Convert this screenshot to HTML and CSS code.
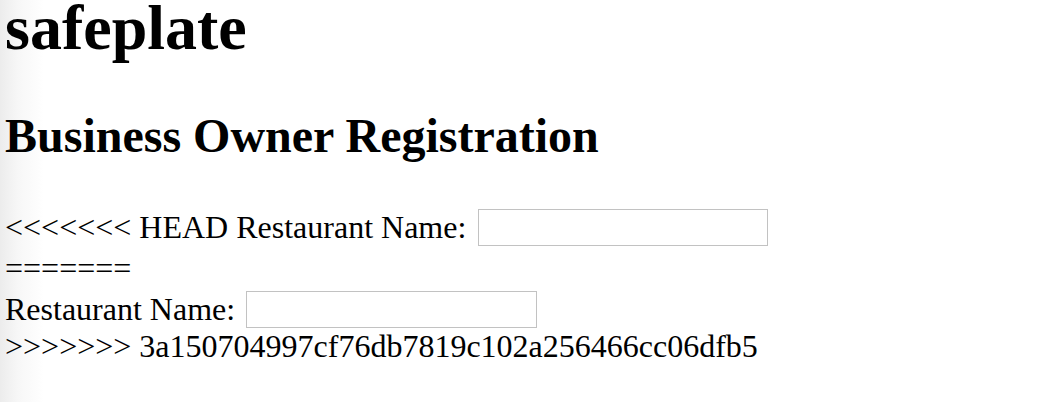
FILE: index.html
```html
<!DOCTYPE html>
<html lang="en">
<head>
<meta charset="utf-8">
<title>safeplate</title>
<link rel="stylesheet" href="styles.css">
</head>
<body>
<main class="page">
  <h1 class="brand">safeplate</h1>
  <h2 class="title">Business Owner Registration</h2>
  <form class="form">
    <div class="row row-head">
      <label class="label" for="name-a">&lt;&lt;&lt;&lt;&lt;&lt;&lt; HEAD Restaurant Name:</label>
      <input class="field" id="name-a" type="text">
    </div>
    <div class="row row-sep">=======</div>
    <div class="row row-other">
      <label class="label" for="name-b">Restaurant Name:</label>
      <input class="field field-b" id="name-b" type="text">
    </div>
    <div class="row row-end">&gt;&gt;&gt;&gt;&gt;&gt;&gt; 3a150704997cf76db7819c102a256466cc06dfb5</div>
  </form>
</main>
</body>
</html>
```

FILE: styles.css
```css
html, body {
  margin: 0;
  padding: 0;
}

body {
  width: 1044px;
  height: 402px;
  overflow: hidden;
  background: linear-gradient(to right, #ececec 0px, #f7f7f7 18px, #ffffff 44px);
  color: #000;
  font-family: "Liberation Serif", "Times New Roman", serif;
}

.page {
  padding: 0 0 0 5px;
}

.brand {
  margin: 0;
  font-size: 64px;
  font-weight: bold;
  line-height: 56px;
}

.title {
  margin: 53px 0 0 0;
  font-size: 48px;
  font-weight: bold;
  line-height: 53px;
}

.form {
  margin-top: 47px;
  font-size: 32px;
}

.row {
  display: flex;
  align-items: center;
  white-space: nowrap;
}

.row-head,
.row-other {
  height: 37px;
  line-height: 37px;
}

.row-head .field {
  margin-left: 12px;
  width: 290px;
}

.row-other .field {
  margin-left: 11px;
  width: 291px;
}

.row-sep {
  line-height: 45px;
  height: 45px;
}

.row-end {
  line-height: 36px;
}

.field {
  box-sizing: border-box;
  height: 37px;
  margin: 0;
  padding: 2px 4px;
  border: 1px solid #c2c2c2;
  background: #fff;
  font: 26px "Liberation Serif", serif;
  outline: none;
}
```
